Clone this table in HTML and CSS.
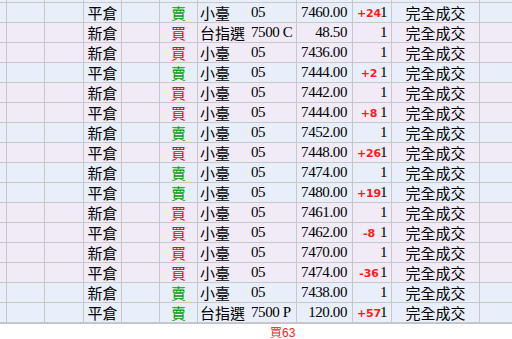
FILE: index.html
```html
<!DOCTYPE html>
<html lang="zh-Hant">
<head>
<meta charset="utf-8">
<link rel="stylesheet" href="styles.css">
</head>
<body>
<div class="table">
  <div class="row top sell"><div class="c"></div><div class="c"></div><div class="c"></div><div class="c"></div><div class="c"></div><div class="c"></div><div class="c"></div><div class="c"></div><div class="c"></div><div class="c"></div><div class="c last"></div></div>

  <div class="row sell"><div class="c"></div><div class="c"></div><div class="c"></div><div class="c ctr">平倉</div><div class="c"></div><div class="c ctr g">賣</div><div class="c prod"><span class="pn">小臺</span><span class="num">05</span></div><div class="c num r">7460.00</div><div class="c qty"><span class="pl">+24</span><span class="num">1</span></div><div class="c ctr">完全成交</div><div class="c last"></div></div>

  <div class="row buy"><div class="c"></div><div class="c"></div><div class="c"></div><div class="c ctr">新倉</div><div class="c"></div><div class="c ctr rd">買</div><div class="c prod"><span class="pn">台指選</span><span class="num">7500 C</span></div><div class="c num r">48.50</div><div class="c qty"><span class="num">1</span></div><div class="c ctr">完全成交</div><div class="c last"></div></div>

  <div class="row buy"><div class="c"></div><div class="c"></div><div class="c"></div><div class="c ctr">新倉</div><div class="c"></div><div class="c ctr rd">買</div><div class="c prod"><span class="pn">小臺</span><span class="num">05</span></div><div class="c num r">7436.00</div><div class="c qty"><span class="num">1</span></div><div class="c ctr">完全成交</div><div class="c last"></div></div>

  <div class="row sell"><div class="c"></div><div class="c"></div><div class="c"></div><div class="c ctr">平倉</div><div class="c"></div><div class="c ctr g">賣</div><div class="c prod"><span class="pn">小臺</span><span class="num">05</span></div><div class="c num r">7444.00</div><div class="c qty"><span class="pl">+2</span><span class="num">1</span></div><div class="c ctr">完全成交</div><div class="c last"></div></div>

  <div class="row buy"><div class="c"></div><div class="c"></div><div class="c"></div><div class="c ctr">新倉</div><div class="c"></div><div class="c ctr rd">買</div><div class="c prod"><span class="pn">小臺</span><span class="num">05</span></div><div class="c num r">7442.00</div><div class="c qty"><span class="num">1</span></div><div class="c ctr">完全成交</div><div class="c last"></div></div>

  <div class="row buy"><div class="c"></div><div class="c"></div><div class="c"></div><div class="c ctr">平倉</div><div class="c"></div><div class="c ctr rd">買</div><div class="c prod"><span class="pn">小臺</span><span class="num">05</span></div><div class="c num r">7444.00</div><div class="c qty"><span class="pl">+8</span><span class="num">1</span></div><div class="c ctr">完全成交</div><div class="c last"></div></div>

  <div class="row sell"><div class="c"></div><div class="c"></div><div class="c"></div><div class="c ctr">新倉</div><div class="c"></div><div class="c ctr g">賣</div><div class="c prod"><span class="pn">小臺</span><span class="num">05</span></div><div class="c num r">7452.00</div><div class="c qty"><span class="num">1</span></div><div class="c ctr">完全成交</div><div class="c last"></div></div>

  <div class="row buy"><div class="c"></div><div class="c"></div><div class="c"></div><div class="c ctr">平倉</div><div class="c"></div><div class="c ctr rd">買</div><div class="c prod"><span class="pn">小臺</span><span class="num">05</span></div><div class="c num r">7448.00</div><div class="c qty"><span class="pl">+26</span><span class="num">1</span></div><div class="c ctr">完全成交</div><div class="c last"></div></div>

  <div class="row sell"><div class="c"></div><div class="c"></div><div class="c"></div><div class="c ctr">新倉</div><div class="c"></div><div class="c ctr g">賣</div><div class="c prod"><span class="pn">小臺</span><span class="num">05</span></div><div class="c num r">7474.00</div><div class="c qty"><span class="num">1</span></div><div class="c ctr">完全成交</div><div class="c last"></div></div>

  <div class="row sell"><div class="c"></div><div class="c"></div><div class="c"></div><div class="c ctr">平倉</div><div class="c"></div><div class="c ctr g">賣</div><div class="c prod"><span class="pn">小臺</span><span class="num">05</span></div><div class="c num r">7480.00</div><div class="c qty"><span class="pl">+19</span><span class="num">1</span></div><div class="c ctr">完全成交</div><div class="c last"></div></div>

  <div class="row buy"><div class="c"></div><div class="c"></div><div class="c"></div><div class="c ctr">新倉</div><div class="c"></div><div class="c ctr rd">買</div><div class="c prod"><span class="pn">小臺</span><span class="num">05</span></div><div class="c num r">7461.00</div><div class="c qty"><span class="num">1</span></div><div class="c ctr">完全成交</div><div class="c last"></div></div>

  <div class="row buy"><div class="c"></div><div class="c"></div><div class="c"></div><div class="c ctr">平倉</div><div class="c"></div><div class="c ctr rd">買</div><div class="c prod"><span class="pn">小臺</span><span class="num">05</span></div><div class="c num r">7462.00</div><div class="c qty"><span class="pl">-8</span><span class="num">1</span></div><div class="c ctr">完全成交</div><div class="c last"></div></div>

  <div class="row buy"><div class="c"></div><div class="c"></div><div class="c"></div><div class="c ctr">新倉</div><div class="c"></div><div class="c ctr rd">買</div><div class="c prod"><span class="pn">小臺</span><span class="num">05</span></div><div class="c num r">7470.00</div><div class="c qty"><span class="num">1</span></div><div class="c ctr">完全成交</div><div class="c last"></div></div>

  <div class="row buy"><div class="c"></div><div class="c"></div><div class="c"></div><div class="c ctr">平倉</div><div class="c"></div><div class="c ctr rd">買</div><div class="c prod"><span class="pn">小臺</span><span class="num">05</span></div><div class="c num r">7474.00</div><div class="c qty"><span class="pl">-36</span><span class="num">1</span></div><div class="c ctr">完全成交</div><div class="c last"></div></div>

  <div class="row sell"><div class="c"></div><div class="c"></div><div class="c"></div><div class="c ctr">新倉</div><div class="c"></div><div class="c ctr g">賣</div><div class="c prod"><span class="pn">小臺</span><span class="num">05</span></div><div class="c num r">7438.00</div><div class="c qty"><span class="num">1</span></div><div class="c ctr">完全成交</div><div class="c last"></div></div>

  <div class="row sell"><div class="c"></div><div class="c"></div><div class="c"></div><div class="c ctr">平倉</div><div class="c"></div><div class="c ctr g">賣</div><div class="c prod"><span class="pn">台指選</span><span class="num">7500 P</span></div><div class="c num r">120.00</div><div class="c qty"><span class="pl">+57</span><span class="num">1</span></div><div class="c ctr">完全成交</div><div class="c last"></div></div>
</div>
<div class="footer"><span class="total">買63</span></div>
</body>
</html>
```
FILE: styles.css
```css
html, body {
  margin: 0;
  padding: 0;
  background: #ffffff;
}
body {
  width: 512px;
  height: 339px;
  overflow: hidden;
  font-family: "Noto Sans CJK TC", "Liberation Serif", serif;
  font-size: 15px;
  color: #000;
}
.table {
  border-bottom: 1px solid #c4c4c4;
}
.row {
  display: grid;
  grid-template-columns: 7px 38px 39px 38px 38px 38px 99px 56px 39px 88px 32px;
  height: 20px;
}
.row.top {
  height: 3px;
}
.sell { background: #e8effa; }
.buy { background: #f0ebf7; }
.c {
  box-sizing: border-box;
  border-right: 1px solid #c8c8c8;
  border-bottom: 1px solid #c8c8c8;
  display: flex;
  align-items: center;
  white-space: nowrap;
  overflow: visible;
  line-height: 19px;
}
.c.last { border-right: none; }
.ctr { justify-content: center; }
.g { color: #00a000; }
.rd { color: #ff0000; }
.num {
  font-family: "Liberation Serif", serif;
  font-size: 15px;
  letter-spacing: -0.4px;
}
.r {
  justify-content: flex-end;
  padding-right: 5px;
}
.prod {
  padding-left: 2px;
}
.pn {
  width: 51px;
  flex: none;
}
.qty {
  position: relative;
  justify-content: flex-end;
  padding-right: 4px;
}
.pl {
  position: absolute;
  left: 2px;
  width: 28px;
  top: 3px;
  text-align: center;
  font-family: "DejaVu Sans", sans-serif;
  font-weight: bold;
  font-size: 11px;
  line-height: 16px;
  color: #ff1a1a;
  letter-spacing: -0.2px;
}
.footer {
  display: flex;
  padding-left: 270px;
  padding-top: 2px;
}
.total {
  color: #ff2020;
  font-family: "Liberation Sans", "Noto Sans CJK TC", sans-serif;
  font-size: 12px;
  line-height: 14px;
}
```
